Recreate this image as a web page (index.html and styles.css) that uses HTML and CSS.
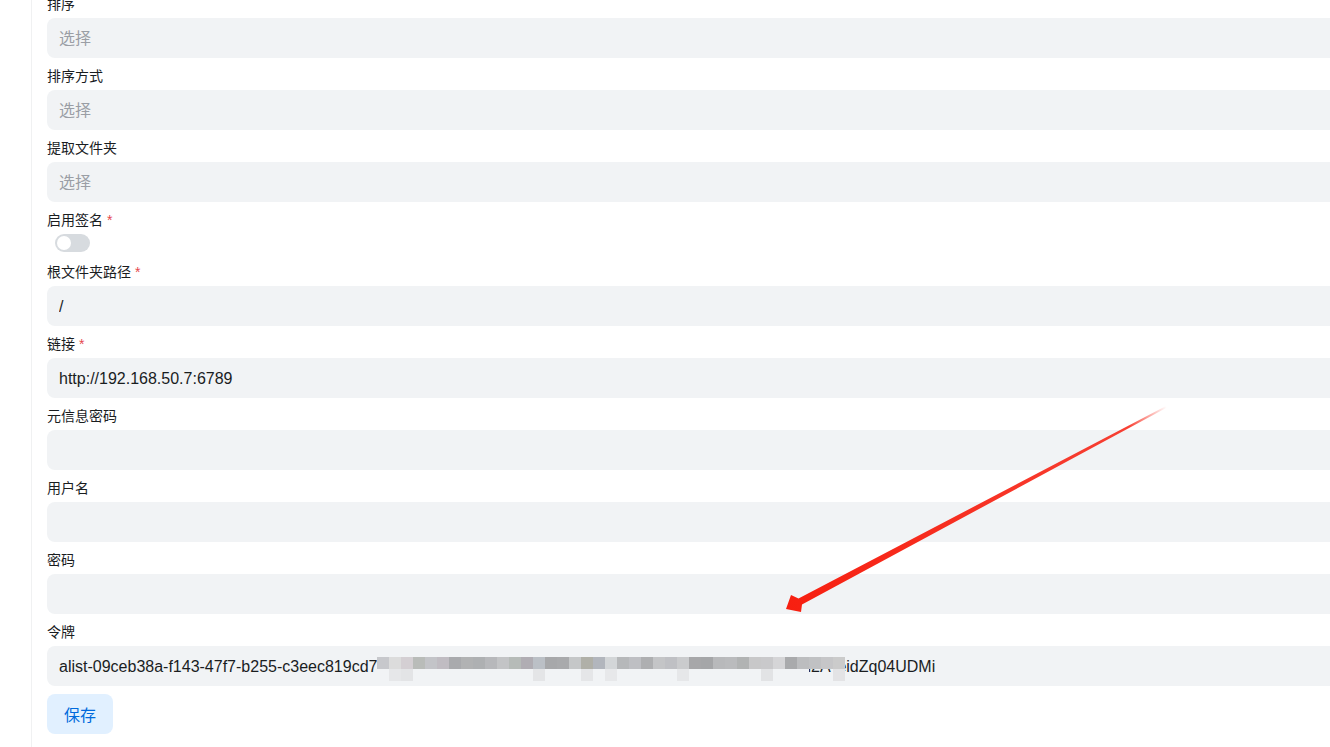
FILE: index.html
```html
<!DOCTYPE html>
<html lang="zh-CN">
<head>
  <meta charset="UTF-8">
  <title>存储 - 编辑</title>
  <link rel="stylesheet" href="styles.css">
</head>
<body>

<div class="page">
  <aside class="sidebar"></aside>

  <main class="main">
    <form class="storage-form" onsubmit="return false;">
      <div class="field">
        <label>排序</label>
        <input class="input" placeholder="选择" readonly>
      </div>
      <div class="field">
        <label>排序方式</label>
        <input class="input" placeholder="选择" readonly>
      </div>
      <div class="field">
        <label>提取文件夹</label>
        <input class="input" placeholder="选择" readonly>
      </div>
      <div class="field">
        <label>启用签名<span class="required">*</span></label>
        <div class="switch-row">
          <span class="switch"><span class="knob"></span></span>
        </div>
      </div>
      <div class="field">
        <label>根文件夹路径<span class="required">*</span></label>
        <input class="input" value="/">
      </div>
      <div class="field">
        <label>链接<span class="required">*</span></label>
        <input class="input" value="http://192.168.50.7:6789">
      </div>
      <div class="field">
        <label>元信息密码</label>
        <input class="input">
      </div>
      <div class="field">
        <label>用户名</label>
        <input class="input">
      </div>
      <div class="field">
        <label>密码</label>
        <input class="input" type="password">
      </div>
      <div class="field">
        <label>令牌</label>
        <div class="input token">
          <span>alist-09ceb38a-f143-47f7-b255-c3eec819cd7</span>
          <span class="mosaic" id="mosaic"></span>
          <span>l2ATeidZq04UDMi</span>
        </div>
      </div>
      <div>
        <button class="save-button">保存</button>
      </div>
    </form>
  </main>

  <svg class="annotation" width="1330" height="747" viewBox="0 0 1330 747">
    <defs>
      <linearGradient id="fade" x1="1166" y1="406" x2="788" y2="608" gradientUnits="userSpaceOnUse">
        <stop offset="0" stop-color="#f71f10" stop-opacity="0"/>
        <stop offset="0.1" stop-color="#f71f10" stop-opacity="0.85"/>
        <stop offset="1" stop-color="#f71f10"/>
      </linearGradient>
    </defs>
    <polygon fill="url(#fade)" points="1166,406 1167,407.5 802,604.5 801,612 786,609 791,595 798.5,598.5"/>
  </svg>
</div>

<script>
  // pixelated cover over the hidden part of the token
  const topRow = ['#c7c8cc','#dcdcdc','#d4cfd3','#b9bcb9','#c3c4c8','#c0bcc2','#a9aaad','#b1b2b3','#aeb0b2','#b7b8bb',
    '#c3c4c6','#b6bbb8','#b0adb3','#bbc0c6','#a7a8aa','#a9aaac','#c5c7c8','#b0b0a8','#b2b6bd','#d3d6d8',
    '#b6b8ba','#bebfc3','#aeafb1','#c4c5c7','#bfc0c4','#cacbcd','#a7a7a9','#a5a6a8','#b8b9bb','#babbbd',
    '#b1b3b3','#c8c8c9','#c9c9cb','#d5d5d7','#a9aaac','#bcbdbf','#c0c1c3','#c6c6c8','#cbcbcb'];
  const bottomRow = ['#f1f3f5','#e6e7e9','#e3e4e6','#f1f3f5','#f1f3f5','#f1f3f5','#f1f3f5','#f1f3f5','#f1f3f5','#f1f3f5',
    '#f1f3f5','#f1f3f5','#f1f3f5','#e4e5e7','#f1f3f5','#f1f3f5','#f1f3f5','#e5e6e8','#f1f3f5','#e7e8ea',
    '#f1f3f5','#f1f3f5','#f1f3f5','#f1f3f5','#f1f3f5','#e6e7e9','#f1f3f5','#f1f3f5','#f1f3f5','#f1f3f5',
    '#f1f3f5','#f1f3f5','#e2e3e5','#f1f3f5','#f1f3f5','#f1f3f5','transparent','transparent','#e3e3e5'];
  const mosaic = document.getElementById('mosaic');
  [...topRow, ...bottomRow].forEach(color => {
    const cell = document.createElement('span');
    cell.style.background = color;
    mosaic.appendChild(cell);
  });
</script>

</body>
</html>
```

FILE: styles.css
```css
html, body {
  margin: 0;
  height: 100%;
  overflow: hidden;
  background: #fff;
}
body {
  font-family: 'Liberation Sans', 'Noto Sans CJK SC', sans-serif;
  color: #1a1d1f;
}
.page {
  position: relative;
  display: flex;
  height: 100%;
}
.sidebar {
  width: 31px;
  flex: none;
  border-right: 1px solid #f0f1f2;
}
.main {
  flex: none;
  width: 1320px;
  padding-left: 15px;
}
.storage-form {
  display: flex;
  flex-direction: column;
  gap: 8px;
  margin-top: -6px;
}
.field {
  display: flex;
  flex-direction: column;
}
.field label {
  font-size: 14px;
  line-height: 20px;
  margin-bottom: 4px;
}
.required {
  color: #e5484d;
  margin-left: 4px;
}
.input {
  box-sizing: border-box;
  height: 40px;
  width: 100%;
  padding: 1px 12px 0;
  border: none;
  border-radius: 8px;
  background: #f1f3f5;
  font-family: inherit;
  font-size: 16px;
  color: #1a1d1f;
  outline: none;
}
.input::placeholder {
  color: #9a9ea5;
}
.token {
  display: flex;
  align-items: center;
  white-space: nowrap;
}
.mosaic {
  position: relative;
  z-index: 1;
  display: grid;
  grid-template-columns: repeat(39, 12px);
  grid-template-rows: 12px 12px;
  margin: 0 -38px 0 0;
  transform: translateY(2px);
}
.switch-row {
  height: 20px;
}
.switch {
  display: inline-block;
  box-sizing: border-box;
  width: 35px;
  height: 18px;
  margin-left: 8px;
  padding: 2px;
  border-radius: 9px;
  background: #d7dbdf;
}
.knob {
  display: block;
  width: 14px;
  height: 14px;
  border-radius: 50%;
  background: #fff;
}
.save-button {
  height: 40px;
  padding: 0 17px;
  border: none;
  border-radius: 8px;
  background: #e1f0ff;
  color: #006adc;
  font-family: inherit;
  font-size: 16px;
  cursor: pointer;
}
.save-button:hover {
  background: #cee7fe;
}
.annotation {
  position: absolute;
  top: 0;
  left: 0;
  pointer-events: none;
}
```
